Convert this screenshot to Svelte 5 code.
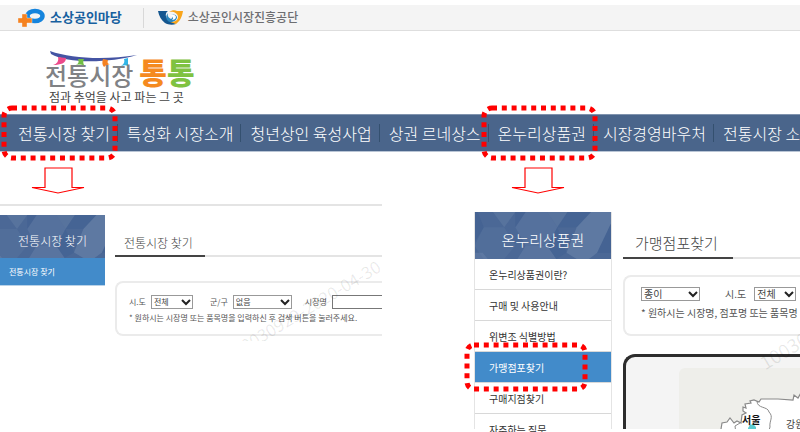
<script>
  const navItems = [
    { text: '전통시장 찾기', marked: true },
    { text: '특성화 시장소개' },
    { text: '청년상인 육성사업' },
    { text: '상권 르네상스' },
    { text: '온누리상품권', marked: true },
    { text: '시장경영바우처' },
    { text: '전통시장 소식' }
  ];
  const voucherMenu = [
    { text: '온누리상품권이란?' },
    { text: '구매 및 사용안내' },
    { text: '위변조 식별방법' },
    { text: '가맹점포찾기', active: true },
    { text: '구매지점찾기' },
    { text: '자주하는 질문' }
  ];
</script>

{#snippet pattern()}
  <svg class="pattern" viewBox="0 0 138 46" preserveAspectRatio="xMidYMid slice" aria-hidden="true">
    <rect width="138" height="46" fill="#4b6896" />
    <g fill="#7b93b5">
      <path d="M20 0h22l-11 15zM73 0h20l-10 15z" opacity=".25" />
      <path d="M31 15l11 18-11 13H11l-9-13 9-18z" opacity=".15" />
      <path d="M102 15l14-15h22v6l-16 34-8 6h-12l-10-6z" opacity=".4" />
      <path d="M73 0l10 15-10 18H52L42 15 52 0z" opacity=".22" />
      <path d="M0 40h10l5 6H0zM52 33h21l9 13H44z" opacity=".3" />
    </g>
    <g fill="#34558b">
      <path d="M42 0h10L42 15zM11 15L0 33V0h5z" opacity=".25" />
      <path d="M93 0h23l-14 15-19 0zM83 15l9 25-10 6-9-13z" opacity=".22" />
      <path d="M138 6v34h-16z" opacity=".25" />
    </g>
  </svg>
{/snippet}

{#snippet chevron()}
  <svg class="chevron" viewBox="0 0 10 7" aria-hidden="true">
    <path d="M1 1l4 4 4-4" fill="none" stroke="#222" stroke-width="2" />
  </svg>
{/snippet}

<div class="page">
  <div class="topbar">
    <a class="brand blue" href="#madang">
      <svg width="28" height="20" viewBox="0 0 28 20" aria-hidden="true">
        <ellipse cx="17" cy="8" rx="7.500" ry="5" fill="none" stroke="#1584dd" stroke-width="4.500" />
        <path fill="#f58220" stroke="#f4f4f4" stroke-width=".4" d="M4 6h5v4h5v5H9v4H4v-4H0v-5h4z" />
      </svg>
      <span>소상공인마당</span>
    </a>
    <a class="brand grey" href="#semas">
      <svg width="26" height="15" viewBox="0 0 26 15" aria-hidden="true">
        <path d="M0 1h10C7 3 7 7 10 9l8 5c-3 1-8 1-11-1C3 10 1 6 0 1z" fill="#14568f" />
        <path d="M11 2c3-2 6-2 8-1l6 0c-1 6-3 10-7 13l-6-2c5 0 8-2 8-5 0-4-5-6-9-5z" fill="#f9a51a" />
        <path d="M10 3c-3 3-2 8 2 9 4 0 7-2 7-5-1-3-4-3-6-2 2 1 2 3 0 4-2-1-4-3-3-6z" fill="#2a86bd" />
        <path d="M12 5c3-1 6 0 6 2s-2 3-4 3c2-2 1-3-2-5z" fill="#fff" />
      </svg>
      <span>소상공인시장진흥공단</span>
    </a>
  </div>

  <header>
    <a class="logo" href="#home">
      <svg class="garland" width="88" height="16" viewBox="0 0 88 16" aria-hidden="true">
        <path d="M0 0c22 8 57 9 87 4C60 12 18 13 1 3z" fill="#4454a3" />
        <path d="M8 6l8 1c0 5-5 7-13 7 4-1 6-4 5-8z" fill="#ec4b8b" />
        <path d="M28 8h6c-1 2-1 4 0 6-2 0-5-1-8 0 3-2 3-3 2-6z" fill="#6fbe44" />
        <path d="M53 8l5 1c-1 3 0 4 2 4-2 1-4 1-6 3-2-2-2-5-1-8z" fill="#f58220" />
        <path d="M74 8l4-1v8c-2-1-4-1-7 0 3-2 4-4 3-7z" fill="#30b5e8" />
      </svg>
      <span class="name"><span>전통시장</span><b class="orange">통</b><b class="green">통</b></span>
      <span class="tagline">점과 추억을 사고 파는 그 곳</span>
    </a>
  </header>

  <nav>
    <ul>
      {#each navItems as item}
        <li>
          <a href="#menu">{item.text}</a>
          {#if item.marked}
            <svg class="mark" width="118" height="56" viewBox="0 0 118 56" aria-hidden="true">
              <rect x="3" y="3" width="111" height="50" rx="8" fill="none" stroke="#f00" stroke-width="5" stroke-dasharray="5 4.800" />
            </svg>
            <svg class="arrow" width="56" height="28" viewBox="0 0 56 28" aria-hidden="true">
              <path d="M15 1h27v19.500h12L28 26 2 20.500h13z" fill="#fff" stroke="#f00" stroke-width="1.200" />
            </svg>
          {/if}
        </li>
      {/each}
    </ul>
  </nav>

  <main>
    <section class="market">
      <aside>
        <h2>{@render pattern()}<span>전통시장 찾기</span></h2>
        <a class="current" href="#market">전통시장 찾기</a>
      </aside>
      <div class="content">
        <div class="title"><h1>전통시장 찾기</h1></div>
        <form class="search">
          <div class="fields">
            <label for="m-sido">시.도</label>
            <span class="select short"><select id="m-sido"><option>전체</option></select>{@render chevron()}</span>
            <label for="m-gungu">군/구</label>
            <span class="select"><select id="m-gungu"><option>없음</option></select>{@render chevron()}</span>
            <label for="m-name">시장명</label>
            <input id="m-name" type="text" />
          </div>
          <p>* 원하시는 시장명 또는 품목명을 입력하신 후 검색 버튼을 눌러주세요.</p>
        </form>
      </div>
      <span class="watermark">10030929-2020-04-30</span>
    </section>

    <section class="voucher">
      <aside>
        <h2>{@render pattern()}<span>온누리상품권</span></h2>
        <ul>
          {#each voucherMenu as item}
            <li class:active={item.active}>
              <a href="#voucher">{item.text}</a>
              {#if item.active}
                <svg class="mark side" width="124" height="50" viewBox="0 0 124 50" aria-hidden="true">
                  <rect x="3" y="3" width="118" height="44" rx="7" fill="none" stroke="#f00" stroke-width="5" stroke-dasharray="5 4.800" />
                </svg>
              {/if}
            </li>
          {/each}
        </ul>
      </aside>
      <div class="content">
        <div class="title"><h1>가맹점포찾기</h1></div>
        <form class="search">
          <div class="fields">
            <span class="select"><select aria-label="상품권 종류"><option>종이</option></select>{@render chevron()}</span>
            <label for="v-sido">시.도</label>
            <span class="select short"><select id="v-sido"><option>전체</option></select>{@render chevron()}</span>
          </div>
          <p>* 원하시는 시장명, 점포명 또는 품목명</p>
        </form>
        <div class="map">
          <div class="land">
            <svg width="140" height="80" viewBox="0 0 140 80" aria-hidden="true">
              <path d="M40 80l2-19 1-6 5-1 3-4 4 5 3-2 4 2 1-8 4-2-3-2v-4l3 1-1-4 6-1-1-2 4-1 5 2 2-3h17l15 1 1-5 4 3 4-7 8-3V80z" fill="#fff" stroke="#8a8a8a" stroke-width="1.200" />
              <path d="M78 33c0 8 11 5 12 11 5 5 0 9 1 15l-5 16M57 66l-1-8 5-3" fill="none" stroke="#8a8a8a" />
              <path d="M69 60l2-3 3-1 3 3v3h-8z" fill="#5ccbd0" />
              <text x="63" y="56" class="city">서울</text>
              <text x="107" y="60" class="region">강원</text>
            </svg>
          </div>
        </div>
        <span class="watermark">10030929</span>
      </div>
    </section>
  </main>
</div>

<style>
  :global(body) { margin: 0; background: #fff; }
  .page {
    box-sizing: border-box;
    display: flex;
    flex-direction: column;
    height: 100vh;
    padding: 5px 0 3px;
    overflow: hidden;
    font-family: "Noto Sans CJK KR", sans-serif;
    color: #555;
  }
  a { color: inherit; text-decoration: none; }
  ul { margin: 0; padding: 0; list-style: none; }
  h1, h2, p { margin: 0; font-weight: 300; }

  .topbar {
    flex: none;
    display: flex;
    align-items: center;
    height: 25px;
    padding-left: 18px;
    background: #f4f4f4;
    border-bottom: 1px solid #dedede;
  }
  .brand { display: flex; align-items: center; gap: 4px; height: 20px; line-height: 20px; white-space: nowrap; }
  .blue { padding-right: 21px; border-right: 1px solid #d8d8d8; color: #17609f; font-size: 13px; font-weight: 700; }
  .brand span { padding-bottom: 2px; }
  .grey { padding-left: 14px; color: #6d6e71; font-size: 12px; font-weight: 500; }

  header { flex: none; display: flex; box-sizing: border-box; height: 83px; padding: 20px 0 0 45px; }
  .logo { display: flex; flex-direction: column; }
  .garland { flex: none; margin: 0 0 -14px 5px; }
  .name { display: flex; align-items: flex-end; height: 36px; line-height: 36px; color: #808285; font-size: 24px; font-weight: 500; }
  .name span { padding: 0 6px 4px 0; line-height: 20px; }
  .name b { font-size: 30px; font-weight: 900; }
  .orange { color: #f58a1f; }
  .green { color: #7fc241; }
  .tagline { padding: 2px 0 0 4px; color: #444; font-size: 12px; line-height: 12px; }

  nav { flex: none; height: 36px; background: #4a658b; border-top: 1px solid #8093ae; border-bottom: 1px solid #b9c5d5; }
  nav ul { display: flex; height: 36px; padding-left: 9px; align-items: center; }
  nav li { position: relative; flex: none; padding: 0 7px 0 9px; border-right: 1px solid #34506f; color: #fff; font-size: 16px; font-weight: 300; line-height: 18px; }
  nav a { white-space: nowrap; }
  .mark { position: absolute; left: -8px; top: -19px; z-index: 2; }
  .arrow { position: absolute; left: 21px; top: 43px; z-index: 2; }
  .mark.side { left: -11px; top: -10px; }

  main { flex: 1; display: flex; min-height: 0; padding-top: 52px; gap: 92px; }
  .market { position: relative; flex: 382 1 0; min-width: 0; display: flex; gap: 10px; height: 126px; padding-top: 9px; border-top: 2px solid #e4e4e4; overflow: hidden; }
  .voucher { flex: 326 1 0; min-width: 0; display: flex; gap: 11px; padding-top: 8px; }
  aside { flex: none; width: 105px; }
  h2 { position: relative; display: flex; align-items: center; justify-content: center; height: 43px; overflow: hidden; color: #fff; font-size: 12px; }
  h2 span { position: relative; padding-top: 8px; }
  .pattern { position: absolute; inset: 0; width: 100%; height: 100%; }
  .current { display: block; height: 27px; padding-left: 9px; background: #428bca; border-bottom: 1px solid #b9d2e8; color: #fff; font-size: 8px; line-height: 27px; }
  .content { position: relative; flex: 1; min-width: 0; display: flex; flex-direction: column; overflow: hidden; }
  .title { display: flex; flex: none; border-bottom: 2px solid #e4e4e4; }
  h1 { margin-bottom: -2px; padding: 15px 12px 0 9px; border-bottom: 2px solid #444; color: #444; font-size: 12px; line-height: 25px; white-space: nowrap; }
  .search { flex: none; height: 39px; margin: 24px 0 0; padding: 12px 0 0 12px; border: 2px solid #ebebeb; border-right: 0; border-radius: 8px 0 0 8px; font-size: 8px; }
  .fields { display: flex; align-items: center; gap: 5px; height: 14px; }
  .fields label { flex: none; line-height: 14px; white-space: nowrap; }
  .select { position: relative; flex: none; display: flex; width: 59px; height: 14px; }
  .select.short { width: 42px; }
  .select + label { margin-left: 12px; }
  .select:not(.short) + label { margin-left: 8px; }
  select, input { box-sizing: border-box; width: 100%; height: 100%; margin: 0; padding: 0 2px; border: 1px solid #999; border-radius: 0; background: #fff; color: #444; font: inherit; line-height: 12px; }
  select { appearance: none; }
  input { flex: 1; min-width: 0; height: 14px; border-right: 0; border-color: #777; }
  .chevron { position: absolute; right: 2px; top: 4px; width: 10px; height: 7px; pointer-events: none; }
  .search p { font-weight: 400; line-height: 17px; white-space: nowrap; }
  .watermark { position: absolute; left: 222px; top: 92px; color: rgb(0 0 0 / 9%); font-size: 17px; line-height: 20px; white-space: nowrap; transform: rotate(-31deg); pointer-events: none; }

  .voucher aside { width: 136px; border: solid #e4e4e4; border-width: 0 1px; }
  .voucher h2 { height: 47px; font-size: 15px; }
  .voucher li { position: relative; height: 30px; padding-left: 14px; border-bottom: 1px solid #d8d8d8; color: #333; font-size: 10px; line-height: 31px; }
  .voucher li.active { background: #428bca; color: #fff; }
  .voucher h1 { padding: 16px 15px 0 12px; font-size: 15px; line-height: 29px; }
  .voucher .search { height: 47px; margin-top: 16px; padding: 10px 0 0 16px; font-size: 10px; }
  .voucher .fields { gap: 8px; }
  .voucher .select + label { margin-left: 17px; }
  .voucher .search p { line-height: 24px; }
  .map { flex: 1; min-height: 0; margin-top: 18px; padding: 11px 0 0 53px; border: solid #2d2d2d; border-width: 3px 0 0 3px; border-radius: 12px 0 0 0; background: #f4f4f4; overflow: hidden; }
  .land { background: #eeeeea; border-radius: 6px 0 0 0; }
  .city { fill: #111; font-size: 10px; font-weight: 700; }
  .region { fill: #444; font-size: 10px; }
  .voucher .watermark { left: 132px; top: 120px; font-size: 19px; }
</style>
